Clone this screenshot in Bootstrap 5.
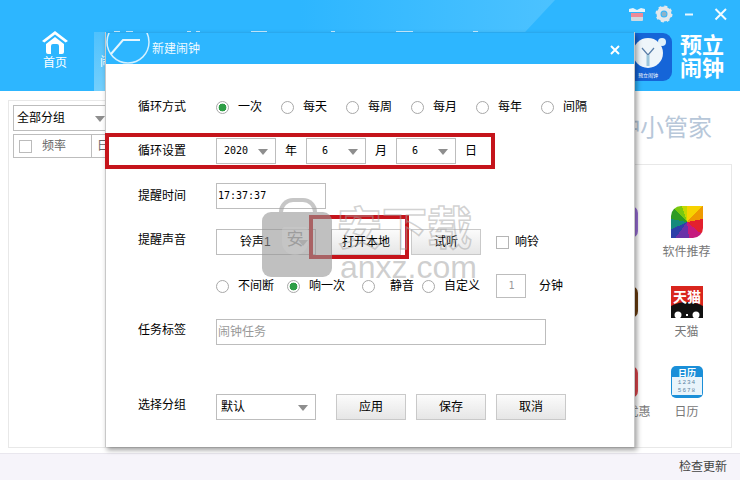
<!DOCTYPE html>
<html lang="zh">
<head>
<meta charset="utf-8">
<title>预立闹钟</title>
<link rel="stylesheet" href="https://cdn.jsdelivr.net/npm/bootstrap@5.3.0/dist/css/bootstrap.min.css">
<style>
html,body{width:740px;height:480px;overflow:hidden;margin:0}
body{font-family:"Liberation Sans","Noto Sans CJK SC",sans-serif;font-size:12px;line-height:1.2;color:#000;background:#fff;position:relative}
.top-bar{height:91px;background:#2db6ff;position:relative;overflow:hidden}
.shine{position:absolute;left:0;top:0}
.home-tab{width:110px;padding-top:29px;color:#fff}
.home-tab span{margin-top:1px;font-size:12px;line-height:16px}
.tab-two{position:absolute;left:94px;top:32px;width:40px;height:59px;background:linear-gradient(#4fc1fd,#74cffc);color:#fff;padding:23px 0 0 6px}
.win-tools{position:absolute;left:0;top:0}
.brand{position:absolute;left:680px;top:34px;color:#fff;font-weight:700;font-size:22px;line-height:23px;width:46px}
.brand-logo{position:absolute;left:624px;top:33px}
.app-wrap{height:362px;padding:9px 8px 5px}
.back-panel{height:100%}
.back-left{width:552px;padding:4px;border:1px solid #e8e8e8;border-right:0}
.back-sel{width:100px;height:26px;border:1px solid #bdbdbd;padding-left:3px;position:relative}
.back-sel::after{content:"";position:absolute;left:81px;top:10px;border:solid transparent;border-width:6px 5px 0;border-top-color:#8e8e8e}
.back-head{width:100px;height:24px;border:1px solid #bdbdbd;margin-top:3px;color:#666}
.back-check{width:13px;height:13px;border:1px solid #bbb;margin:0 10px 0 5px}
.back-col{margin-left:25px;border-left:1px solid #bdbdbd;padding-left:5px;line-height:22px}
.back-right{width:172px}
.slogan{font-size:24px;line-height:30px;color:#b7c7d9;padding:13px 20px 0 0;height:64px;text-align:right;white-space:nowrap}
.slogan-box{border:1px solid #e8e8e8;border-left:0;height:284px;padding:41px 12px 0 0}
.app-grid{display:grid;grid-template-columns:65px 65px;grid-auto-rows:80px;justify-content:end}
.app-cell{color:#777;display:flex;flex-direction:column;align-items:center;gap:7px;line-height:14px;white-space:nowrap}
.app-pic{width:32px;height:32px;display:block;flex:none}
.tile-a{border-radius:7px;background:#9a6fd8}
.tile-b{border-radius:7px;background:#6b3d10}
.tile-c{border-radius:7px;background:#e0474e}
.shift-label{margin-left:10px}
.leaf{border-radius:10px 0 10px 0;background:conic-gradient(#f7d200 0 12%,#ef9a00 0 22%,#e3202e 0 36%,#c51a7e 0 48%,#6a31a8 0 60%,#2b3fa8 0 68%,#148a7c 0 78%,#2e9b24 0 88%,#79c80f 0 95%,#c4d800 0)}
.dialog-win{position:absolute;left:105px;top:32px;width:530px;height:415px;background:#fff;border:solid #c8c8c8;border-width:0 1px 0 1px;box-shadow:2px 3px 5px rgba(0,0,0,.38);z-index:5}
.dialog-head{height:32px;background:#2db6ff;border-top:1px solid #2aa9ee;position:relative;overflow:hidden;color:#f2fbff}
.dialog-head .clock-art{position:absolute;left:0;top:-1px}
.dialog-head .head-title{position:absolute;left:46px;top:9px;line-height:14px}
.dialog-head .head-x{position:absolute;left:504px;top:12px}
.dialog-body{padding:30px 0 0 32px}
.row-line{height:26px}
.row-two{margin-top:18px}.row-three{margin-top:19px}.row-four{margin-top:20px}
.row-five{margin-top:19px;height:24px;padding-left:78px}.row-six{margin-top:21px}.row-seven{margin-top:49px}
.lab{width:78px;flex:none;padding-top:1px}
.lab-up{margin-bottom:4px}
.choice{width:65px;padding-top:1px}
.rd.form-check-input{width:13px;height:13px;margin:0;flex:none;border:1px solid #a8a8a8;background-color:#fff;box-shadow:none}
.rd.form-check-input:checked[type=radio]{background-color:#fff;border-color:#a8a8a8;background-image:radial-gradient(circle,#2e9e46 0 3.6px,transparent 4.2px)}
.choice .rd,.row-five .rd{margin-right:9px}
.drop{height:26px;border:1px solid #bdbdbd;position:relative;background:#fff;padding-left:7px}
.drop::after{content:"";position:absolute;right:7px;top:10px;border:solid transparent;border-width:6px 5px 0;border-top-color:#8e8e8e}
.drop-six{padding-left:15px}
.w60{width:60px}.w100{width:100px}
.mono{font-family:"DejaVu Sans Mono","Noto Sans CJK SC",monospace;font-size:10px}
.unit{width:30px;text-align:center;padding-top:1px}
.entry{height:26px;border:1px solid #bdbdbd;padding:0 0 0 1px;background:#fff;color:#000}
.entry-time{width:110px}
.entry-tag{width:330px;color:#999}
.entry-num{width:30px;height:24px;text-align:center;color:#999;margin:0 13px 0 17px}
.gbtn.btn{width:70px;height:26px;padding:0;font-size:12px;line-height:24px;border:1px solid #c9c9c9;border-radius:0;background:linear-gradient(#fbfbfb,#e6e6e6);color:#000}
.btn-a{margin-left:15px}.btn-b{margin-left:10px}.btn-c{margin-left:20px}
.chk{width:13px;height:13px;border:1px solid #b5b5b5;margin:0 6px 0 15px;flex:none}
.t-a{width:49px}.t-b{width:53px}.t-c{width:38px;padding-left:6px}.t-d{width:35px;flex:none;white-space:nowrap}
.red-frame{position:absolute;border:4px solid #c5141b;z-index:6;pointer-events:none}
.red-one{left:105px;top:133px;width:390px;height:36px}
.red-two{left:309px;top:215px;width:100px;height:44px}
.stamp{position:absolute;left:262px;top:196px;z-index:7;pointer-events:none}
.stamp-lock{width:70px;height:65px;margin-top:16px;border-radius:9px;background:rgba(150,150,150,.6);position:relative}
.stamp-lock::before{content:"";position:absolute;left:17px;top:-14px;width:38px;height:14px;border:4px solid rgba(160,160,160,.6);border-bottom:0;border-radius:18px 18px 0 0}
.stamp-shield{position:absolute;left:20px;top:15px;font-size:17px;line-height:26px;width:26px;height:28px;text-align:center;color:rgba(150,150,150,.85);background:rgba(205,205,205,.45);border-radius:3px 3px 13px 13px}
.stamp-text{position:absolute;left:75px;top:11px;width:150px}
.stamp-cn{font-size:45px;line-height:46px;color:transparent;-webkit-text-stroke:1.5px rgba(165,165,165,.5);white-space:nowrap;font-weight:700}
.stamp-en{font-size:32px;line-height:30px;margin:-1px 0 0 3px;color:rgba(160,160,160,.5);white-space:nowrap}
.foot-bar{height:27px;background:#f6f4fa;border-top:1px solid #e9e7ee;padding-right:13px;color:#444}
</style>
</head>
<body>
<header class="top-bar d-flex">
  <svg class="shine" width="740" height="91" aria-hidden="true">
    <defs><linearGradient id="sh" x1="0" x2="1"><stop offset="0" stop-color="#2db6ff"/><stop offset="1" stop-color="#4cc2ff"/></linearGradient></defs>
    <polygon points="300,0 555,0 470,91 300,91" fill="url(#sh)"/>
    <path d="M114 31.5h6M126 31.5h7M187 31.5h4M196 31.5h4M251 31.5h16M331 31.5h4M396 31.5h17M473 31.5h5" stroke="#e9f8ff" stroke-width="1" opacity=".8"/>
  </svg>
  <div class="home-tab d-flex flex-column align-items-center">
    <svg width="28" height="25" viewBox="0 0 28 25" aria-hidden="true"><path d="M1 12 14 2l13 10-2.4 1.6L14 5.4 3.4 13.6z" fill="#fff"/><path d="M5 15 14 8l9 7v8a2 2 0 0 1-2 2h-3v-8a2 2 0 0 0-2-2h-4a2 2 0 0 0-2 2v8H7a2 2 0 0 1-2-2z" fill="#fff"/></svg>
    <span>首页</span>
  </div>
  <div class="tab-two">闹钟</div>
  <svg class="win-tools" width="740" height="30" aria-hidden="true">
    <path d="M629 9l4-1 4 2 4-2 4 1v3h-16z" fill="#e6f4fb"/><rect x="631" y="13" width="12" height="4" fill="#ee8a98"/><path d="M631 17h12v3a1 1 0 0 1-1 1h-10a1 1 0 0 1-1-1z" fill="#cfd9e0"/>
    <circle cx="664" cy="14" r="5.5" fill="none" stroke="#e2e8ec" stroke-width="4"/><circle cx="664" cy="14" r="2.5" fill="#8fb3c8"/><circle cx="664" cy="14" r="7.5" fill="none" stroke="#e2e8ec" stroke-width="2" stroke-dasharray="3 2.9"/>
    <path d="M685 14.5h8" stroke="#e9f7ff" stroke-width="2"/>
    <path d="M715.5 9l10.5 10.5M726 9l-10.5 10.5" stroke="#f2fbff" stroke-width="2"/>
  </svg>
  <svg class="brand-logo" width="48" height="48" viewBox="0 0 48 48" aria-hidden="true">
    <rect width="48" height="48" rx="9" fill="#1565d8"/>
    <circle cx="38" cy="9" r="4" fill="#dff1fb"/>
    <circle cx="24" cy="20" r="15" fill="#eef5fa"/>
    <path d="M18 15l6 7 6-7" fill="none" stroke="#5a7ea8" stroke-width="1.2"/>
    <path d="M24 22v11" stroke="#9cc6dc" stroke-width="3"/>
    <text x="24" y="44" font-size="5" fill="#fff" text-anchor="middle" font-family="Noto Sans CJK SC">预立闹钟</text>
  </svg>
  <div class="brand">预立闹钟</div>
</header>

<main class="app-wrap">
  <div class="back-panel d-flex">
    <div class="back-left">
      <div class="back-sel d-flex align-items-center">全部分组</div>
      <div class="back-head d-flex align-items-center"><span class="back-check"></span><span>频率</span><span class="back-col">日</span></div>
    </div>
    <div class="back-right">
      <div class="slogan">闹钟小管家</div>
      <div class="slogan-box">
        <div class="app-grid">
          <div class="app-cell"><span class="app-pic tile-a"></span><span>直播</span></div>
          <div class="app-cell"><span class="app-pic leaf"></span><span>软件推荐</span></div>
          <div class="app-cell"><span class="app-pic tile-b"></span><span>传奇</span></div>
          <div class="app-cell">
            <svg class="app-pic" viewBox="0 0 32 32" aria-hidden="true"><rect width="32" height="32" fill="#d9251d"/><path d="M0 32V20q16-8 32 0v12z" fill="#111"/><circle cx="7" cy="29" r="3.5" fill="#fff"/><circle cx="25" cy="29" r="3.5" fill="#fff"/><rect x="15" y="28" width="2" height="2" fill="#fff"/><text x="16" y="16" font-size="14" font-weight="700" fill="#fff" text-anchor="middle" font-family="Noto Sans CJK SC">天猫</text></svg>
            <span>天猫</span>
          </div>
          <div class="app-cell"><span class="app-pic tile-c"></span><span class="shift-label">超值优惠</span></div>
          <div class="app-cell">
            <svg class="app-pic" viewBox="0 0 32 32" aria-hidden="true"><rect width="32" height="32" rx="5" fill="#1b8fd8"/><rect x="1" y="11" width="30" height="18" fill="#e9f4fb"/><text x="16" y="9.5" font-size="9" font-weight="700" fill="#fff" text-anchor="middle" font-family="Noto Sans CJK SC">日历</text><text x="16" y="18" font-size="6" fill="#5d84a3" text-anchor="middle" letter-spacing="1" font-family="Liberation Mono">1234</text><text x="16" y="26" font-size="6" fill="#5d84a3" text-anchor="middle" letter-spacing="1" font-family="Liberation Mono">5678</text></svg>
            <span>日历</span>
          </div>
        </div>
      </div>
    </div>
  </div>
</main>

<section class="dialog-win">
  <div class="dialog-head">
    <svg class="clock-art" width="60" height="33" aria-hidden="true"><circle cx="22" cy="10" r="21" fill="none" stroke="#d4f0ff" stroke-width="1.5"/><path d="M5 22 17 8h17" fill="none" stroke="#e4f6ff" stroke-width="2"/></svg>
    <span class="head-title">新建闹钟</span>
    <svg class="head-x" width="10" height="10" aria-hidden="true"><path d="M1 1l8 8M9 1l-8 8" stroke="#fff" stroke-width="2"/></svg>
  </div>
  <div class="dialog-body">
    <div class="row-line d-flex align-items-center">
      <span class="lab">循环方式</span>
      <label class="choice d-flex align-items-center"><input class="rd form-check-input" type="radio" name="cy" checked>一次</label>
      <label class="choice d-flex align-items-center"><input class="rd form-check-input" type="radio" name="cy">每天</label>
      <label class="choice d-flex align-items-center"><input class="rd form-check-input" type="radio" name="cy">每周</label>
      <label class="choice d-flex align-items-center"><input class="rd form-check-input" type="radio" name="cy">每月</label>
      <label class="choice d-flex align-items-center"><input class="rd form-check-input" type="radio" name="cy">每年</label>
      <label class="choice d-flex align-items-center"><input class="rd form-check-input" type="radio" name="cy">间隔</label>
    </div>
    <div class="row-line row-two d-flex align-items-center">
      <span class="lab">循环设置</span>
      <div class="drop w60 mono d-flex align-items-center">2020</div><span class="unit">年</span>
      <div class="drop drop-six w60 mono d-flex align-items-center">6</div><span class="unit">月</span>
      <div class="drop drop-six w60 mono d-flex align-items-center">6</div><span class="unit">日</span>
    </div>
    <div class="row-line row-three d-flex align-items-center">
      <span class="lab">提醒时间</span>
      <div class="entry entry-time mono d-flex align-items-center">17:37:37</div>
    </div>
    <div class="row-line row-four d-flex align-items-center">
      <span class="lab lab-up">提醒声音</span>
      <div class="drop w100 d-flex align-items-center"><span class="ms-3">铃声1</span></div>
      <button class="gbtn btn btn-a" type="button">打开本地</button>
      <button class="gbtn btn btn-b" type="button">试听</button>
      <span class="chk"></span><span>响铃</span>
    </div>
    <div class="row-line row-five d-flex align-items-center">
      <input class="rd form-check-input" type="radio" name="sd"><span class="t-a">不间断</span>
      <input class="rd form-check-input" type="radio" name="sd" checked><span class="t-b">响一次</span>
      <input class="rd form-check-input" type="radio" name="sd"><span class="t-c">静音</span>
      <input class="rd form-check-input" type="radio" name="sd"><span class="t-d">自定义</span>
      <div class="entry entry-num mono d-flex align-items-center justify-content-center">1</div><span>分钟</span>
    </div>
    <div class="row-line row-six d-flex align-items-center">
      <span class="lab lab-up">任务标签</span>
      <div class="entry entry-tag d-flex align-items-center">闹钟任务</div>
    </div>
    <div class="row-line row-seven d-flex align-items-center">
      <span class="lab lab-up">选择分组</span>
      <div class="drop w100 d-flex align-items-center ps-1">默认</div>
      <button class="gbtn btn btn-c" type="button">应用</button>
      <button class="gbtn btn btn-b" type="button">保存</button>
      <button class="gbtn btn btn-b" type="button">取消</button>
    </div>
  </div>
</section>

<div class="red-frame red-one"></div>
<div class="red-frame red-two"></div>

<div class="stamp">
  <div class="stamp-lock"><div class="stamp-shield">安</div></div>
  <div class="stamp-text">
    <div class="stamp-cn">安下载</div>
    <div class="stamp-en">anxz.com</div>
  </div>
</div>

<footer class="foot-bar d-flex align-items-center justify-content-end">检查更新</footer>
<script src="https://cdn.jsdelivr.net/npm/bootstrap@5.3.0/dist/js/bootstrap.bundle.min.js"></script>
</body>
</html>
